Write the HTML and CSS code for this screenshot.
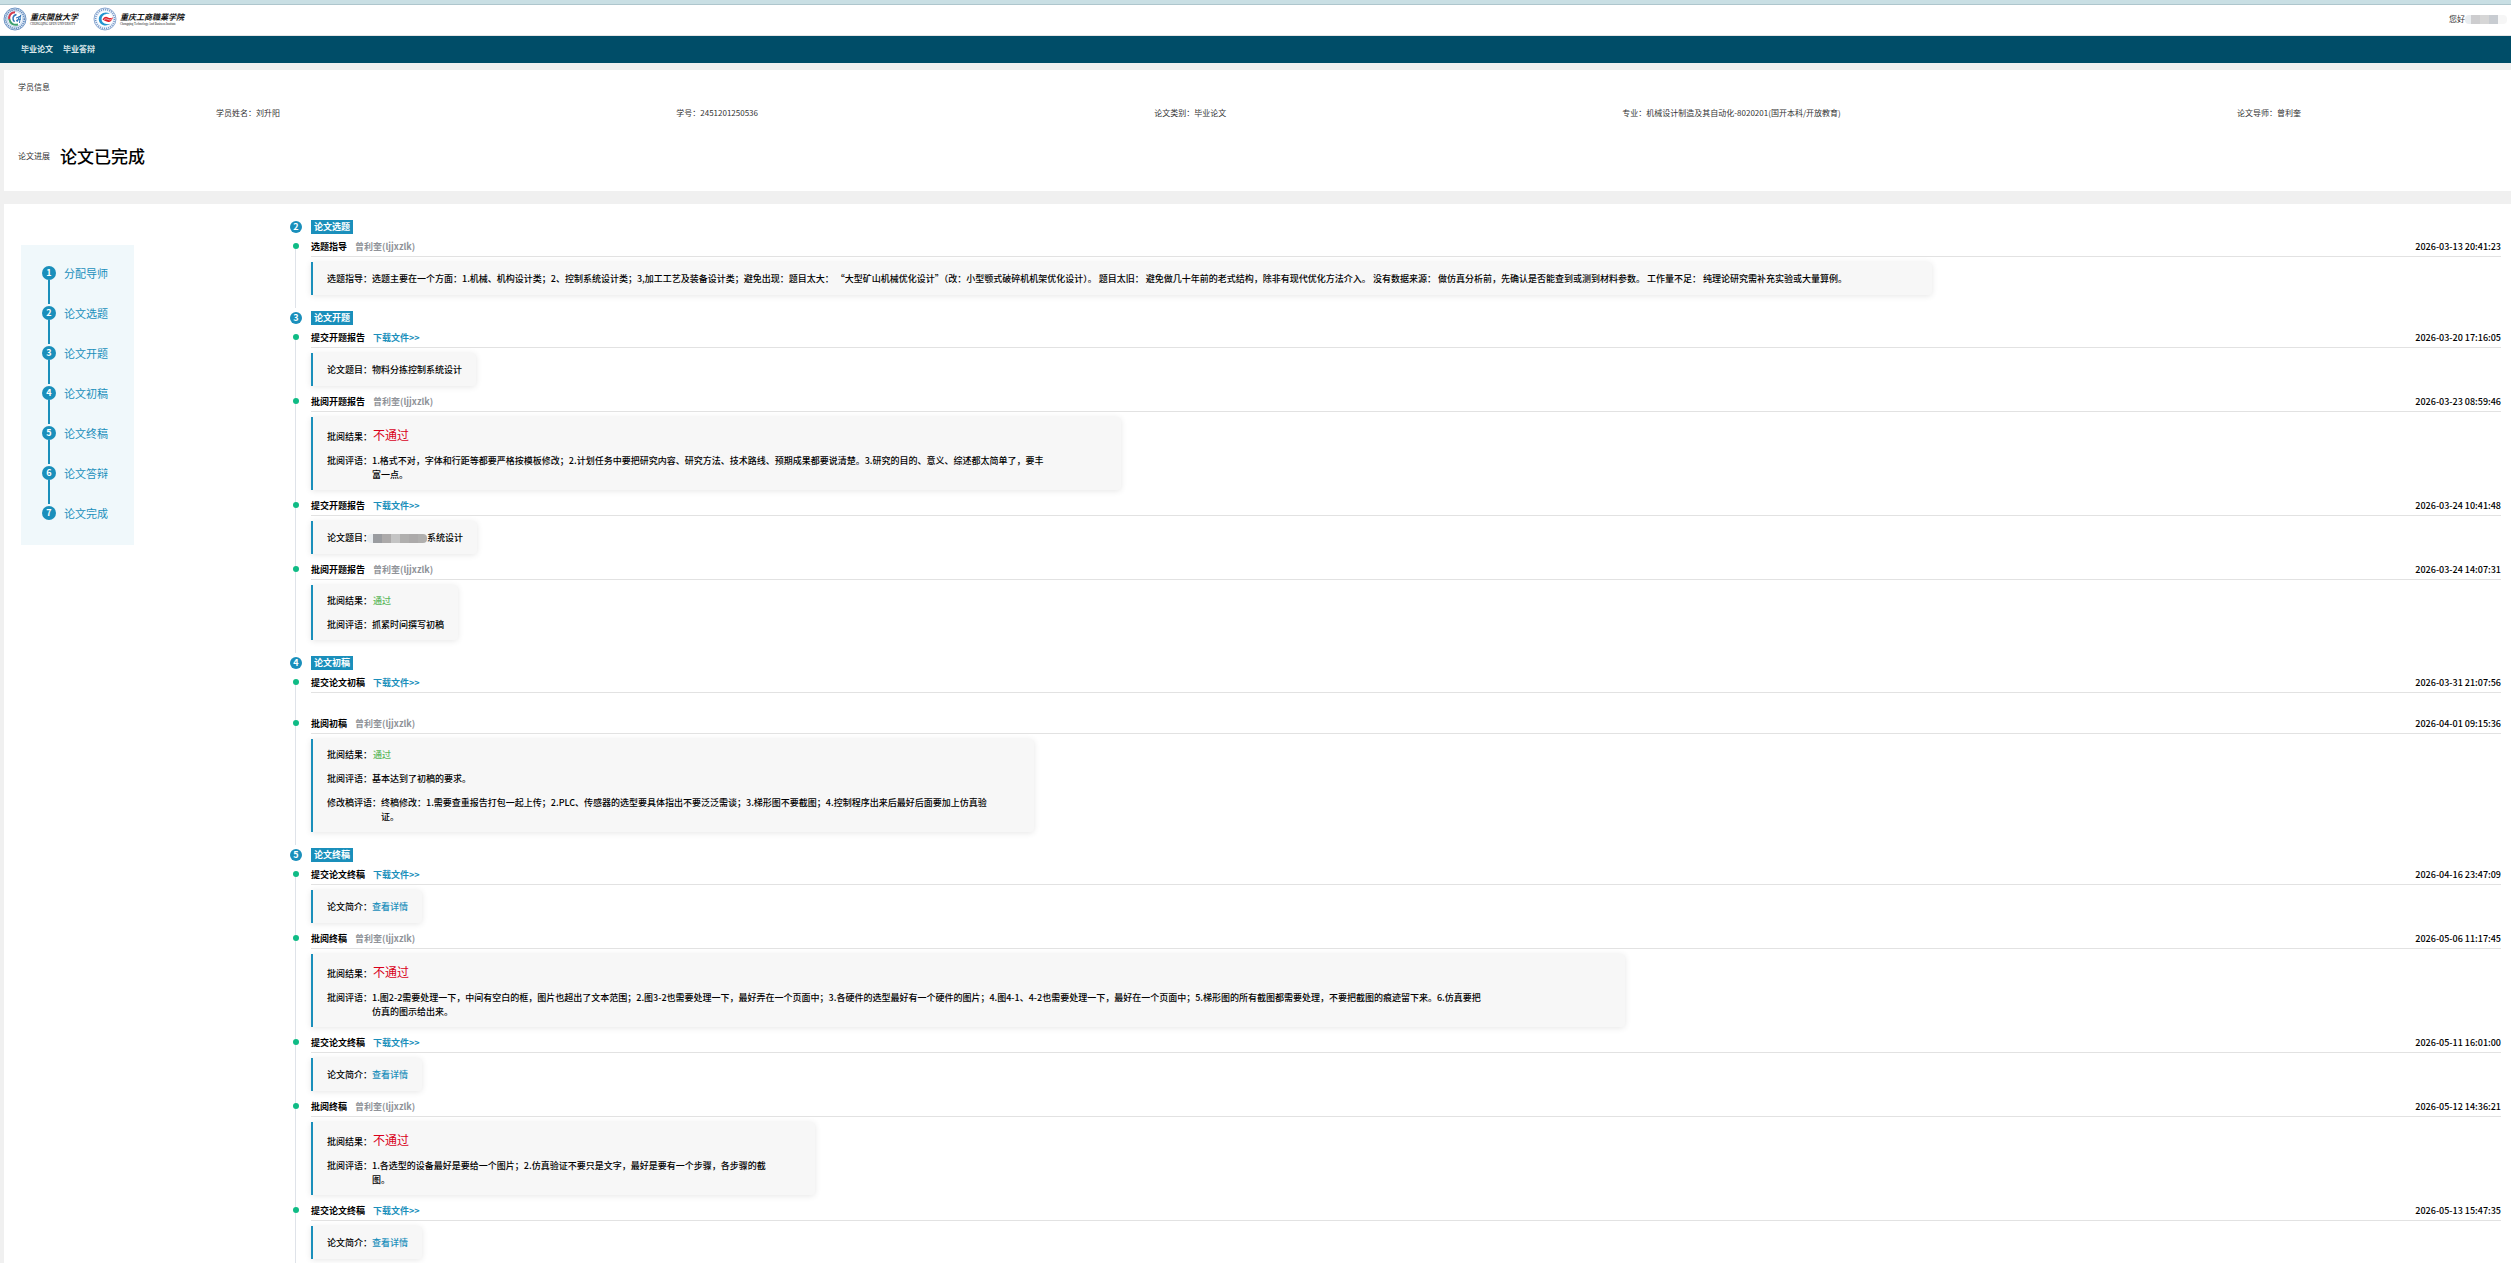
FILE: index.html
```html
<!DOCTYPE html>
<html lang="zh">
<head>
  <meta charset="UTF-8">
  <meta name="viewport" content="width=device-width, initial-scale=1.0">
  <title>毕业论文</title>
  <link rel="stylesheet" href="styles.css">
</head>
<body>
  <header class="top">
    <a href="#" class="logo">
      <svg width="24" height="24" viewBox="0 0 24 24">
        <circle cx="12" cy="12" r="11" fill="#e4edf7" stroke="#6f95c4" stroke-width="1"/>
        <circle cx="12" cy="12" r="9.3" fill="none" stroke="#5c86bc" stroke-width="1.6" stroke-dasharray="1.2 .9"/>
        <circle cx="12" cy="12" r="7.6" fill="#fff" stroke="#9db9da" stroke-width=".5"/>
        <path d="M12 5.2C7.500 5.500 5.600 9 6.300 12.500" fill="none" stroke="#d43a4c" stroke-width="2"/>
        <path d="M6.300 12C7 16.500 10.500 18.600 15 17.600" fill="none" stroke="#3fa06f" stroke-width="2"/>
        <path d="M13.500 7.500C9.500 8.500 9 12.500 11.500 14.800" fill="none" stroke="#2f74b8" stroke-width="1.500"/>
        <path d="M13 11l5-2M14 15l2.500-6M17.500 8l-1 8M13 13.500l5-1.500" fill="none" stroke="#2f74b8" stroke-width="1"/>
      </svg>
      <span class="logo-text"><b>重庆開放大学</b><i>CHONGQING OPEN UNIVERSITY</i></span>
    </a>
    <a href="#" class="logo">
      <svg width="24" height="24" viewBox="0 0 24 24">
        <circle cx="12" cy="12" r="11" fill="#eaf1f9" stroke="#8fabd2" stroke-width="1"/>
        <circle cx="12" cy="12" r="9.400" fill="none" stroke="#7396c8" stroke-width="1.600" stroke-dasharray="1 1.100"/>
        <circle cx="12" cy="12" r="7.800" fill="#fff"/>
        <path d="M17 6.800C12 3.500 5.600 7 5.800 12.500C6 17.800 12.500 20.500 17.500 16.800C13 18 8.600 16 8.600 12.200C8.600 8.200 12.500 6 17 6.800Z" fill="#2294cf"/>
        <path d="M9.500 12.500C11.500 9 13.500 9.500 15 10.500S18.500 11.200 20 10.200C19 14 17 15.500 14.500 14.800S11.500 13.500 9.500 12.500Z" fill="#e0202c"/>
        <path d="M11 12.500q2-1.500 4 0t4-.8" fill="none" stroke="#fff" stroke-width=".6"/>
      </svg>
      <span class="logo-text"><b>重庆工商職業学院</b><i>Chongqing Technology And Business Institute</i></span>
    </a>
    <div class="user">您好<span class="mosaic"><span class="m1"></span><span class="m2"></span><span class="m3"></span><span class="m4"></span><span class="m5"></span></span></div>
  </header>
  <nav class="nav">
    <a href="#">毕业论文</a>
    <a href="#">毕业答辩</a>
  </nav>

  <section class="card info">
    <h2>学员信息</h2>
    <ul class="info-list">
      <li>学员姓名：刘升阳</li>
      <li>学号：2451201250536</li>
      <li>论文类别：毕业论文</li>
      <li>专业：机械设计制造及其自动化-8020201(国开本科/开放教育)</li>
      <li>论文导师：曾利奎</li>
    </ul>
    <div class="progress"><span>论文进展</span><strong>论文已完成</strong></div>
  </section>

  <main class="card main">
    <aside class="steps">
      <ol>
        <li><span class="num">1</span>分配导师</li>
        <li><span class="num">2</span>论文选题</li>
        <li><span class="num">3</span>论文开题</li>
        <li><span class="num">4</span>论文初稿</li>
        <li><span class="num">5</span>论文终稿</li>
        <li><span class="num">6</span>论文答辩</li>
        <li><span class="num">7</span>论文完成</li>
      </ol>
    </aside>

    <div class="timeline">
      <section class="stage">
        <h3><span class="num">2</span><span class="tag">论文选题</span></h3>
        <div class="stage-body">
          <div class="item">
            <div class="item-head"><b>选题指导</b><span class="name">曾利奎(ljjxzlk)</span><time>2026-03-13 20:41:23</time></div>
            <dl class="box w74">
              <div><dt>选题指导：</dt><dd>选题主要在一个方面：1.机械、机构设计类；2、控制系统设计类；3,加工工艺及装备设计类；避免出现：题目太大： “大型矿山机械优化设计”（改：小型颚式破碎机机架优化设计）。 题目太旧： 避免做几十年前的老式结构，除非有现代优化方法介入。 没有数据来源： 做仿真分析前，先确认是否能查到或测到材料参数。 工作量不足： 纯理论研究需补充实验或大量算例。</dd></div>
            </dl>
          </div>
        </div>
      </section>

      <section class="stage">
        <h3><span class="num">3</span><span class="tag">论文开题</span></h3>
        <div class="stage-body">
          <div class="item">
            <div class="item-head"><b>提交开题报告</b><a href="#">下载文件&gt;&gt;</a><time>2026-03-20 17:16:05</time></div>
            <dl class="box">
              <div><dt>论文题目：</dt><dd>物料分拣控制系统设计</dd></div>
            </dl>
          </div>
          <div class="item">
            <div class="item-head"><b>批阅开题报告</b><span class="name">曾利奎(ljjxzlk)</span><time>2026-03-23 08:59:46</time></div>
            <dl class="box w37">
              <div><dt>批阅结果：</dt><dd class="fail">不通过</dd></div>
              <div><dt>批阅评语：</dt><dd>1.格式不对，字体和行距等都要严格按模板修改；2.计划任务中要把研究内容、研究方法、技术路线、预期成果都要说清楚。3.研究的目的、意义、综述都太简单了，要丰<br>富一点。</dd></div>
            </dl>
          </div>
          <div class="item">
            <div class="item-head"><b>提交开题报告</b><a href="#">下载文件&gt;&gt;</a><time>2026-03-24 10:41:48</time></div>
            <dl class="box">
              <div class="masked"><dt>论文题目：</dt><dd><span class="mosaic"><span class="m1"></span><span class="m6"></span><span class="m7"></span><span class="m8"></span><span class="m9"></span><span class="m7"></span><span class="m9"></span></span>系统设计</dd></div>
            </dl>
          </div>
          <div class="item">
            <div class="item-head"><b>批阅开题报告</b><span class="name">曾利奎(ljjxzlk)</span><time>2026-03-24 14:07:31</time></div>
            <dl class="box">
              <div><dt>批阅结果：</dt><dd class="pass">通过</dd></div>
              <div><dt>批阅评语：</dt><dd>抓紧时间撰写初稿</dd></div>
            </dl>
          </div>
        </div>
      </section>

      <section class="stage">
        <h3><span class="num">4</span><span class="tag">论文初稿</span></h3>
        <div class="stage-body">
          <div class="item empty">
            <div class="item-head"><b>提交论文初稿</b><a href="#">下载文件&gt;&gt;</a><time>2026-03-31 21:07:56</time></div>
          </div>
          <div class="item">
            <div class="item-head"><b>批阅初稿</b><span class="name">曾利奎(ljjxzlk)</span><time>2026-04-01 09:15:36</time></div>
            <dl class="box w33">
              <div><dt>批阅结果：</dt><dd class="pass">通过</dd></div>
              <div><dt>批阅评语：</dt><dd>基本达到了初稿的要求。</dd></div>
              <div><dt>修改稿评语：</dt><dd>终稿修改：1.需要查重报告打包一起上传；2.PLC、传感器的选型要具体指出不要泛泛需谈；3.梯形图不要截图；4.控制程序出来后最好后面要加上仿真验<br>证。</dd></div>
            </dl>
          </div>
        </div>
      </section>

      <section class="stage">
        <h3><span class="num">5</span><span class="tag">论文终稿</span></h3>
        <div class="stage-body">
          <div class="item">
            <div class="item-head"><b>提交论文终稿</b><a href="#">下载文件&gt;&gt;</a><time>2026-04-16 23:47:09</time></div>
            <dl class="box">
              <div><dt>论文简介：</dt><dd><a href="#">查看详情</a></dd></div>
            </dl>
          </div>
          <div class="item">
            <div class="item-head"><b>批阅终稿</b><span class="name">曾利奎(ljjxzlk)</span><time>2026-05-06 11:17:45</time></div>
            <dl class="box w60">
              <div><dt>批阅结果：</dt><dd class="fail">不通过</dd></div>
              <div><dt>批阅评语：</dt><dd>1.图2-2需要处理一下，中间有空白的框，图片也超出了文本范围；2.图3-2也需要处理一下，最好弄在一个页面中；3.各硬件的选型最好有一个硬件的图片；4.图4-1、4-2也需要处理一下，最好在一个页面中；5.梯形图的所有截图都需要处理，不要把截图的痕迹留下来。6.仿真要把<br>仿真的图示给出来。</dd></div>
            </dl>
          </div>
          <div class="item">
            <div class="item-head"><b>提交论文终稿</b><a href="#">下载文件&gt;&gt;</a><time>2026-05-11 16:01:00</time></div>
            <dl class="box">
              <div><dt>论文简介：</dt><dd><a href="#">查看详情</a></dd></div>
            </dl>
          </div>
          <div class="item">
            <div class="item-head"><b>批阅终稿</b><span class="name">曾利奎(ljjxzlk)</span><time>2026-05-12 14:36:21</time></div>
            <dl class="box w23">
              <div><dt>批阅结果：</dt><dd class="fail">不通过</dd></div>
              <div><dt>批阅评语：</dt><dd>1.各选型的设备最好是要给一个图片；2.仿真验证不要只是文字，最好是要有一个步骤，各步骤的截<br>图。</dd></div>
            </dl>
          </div>
          <div class="item">
            <div class="item-head"><b>提交论文终稿</b><a href="#">下载文件&gt;&gt;</a><time>2026-05-13 15:47:35</time></div>
            <dl class="box">
              <div><dt>论文简介：</dt><dd><a href="#">查看详情</a></dd></div>
            </dl>
          </div>
        </div>
      </section>
    </div>
  </main>
</body>
</html>
```
FILE: styles.css
```css
* {
  margin: 0;
  padding: 0;
  box-sizing: border-box;
}
body {
  background: #f0f0f0;
  color: #000;
  font: 9px/14px "Noto Sans CJK SC", sans-serif;
}
ul, ol {
  list-style: none;
}
a {
  color: #1a8fbb;
  text-decoration: none;
}
.top {
  display: flex;
  align-items: center;
  gap: 15px;
  height: 36px;
  padding: 0 4px 1px 3px;
  background: #fff;
  border-top: 4px solid #c9dfe4;
  border-bottom: 1px solid #e6e6e6;
  box-shadow: inset 0 1px 0 #aec6cd;
}
.logo {
  display: flex;
  align-items: center;
  gap: 3px;
  color: #111;
}
.logo svg {
  display: block;
}
.logo-text b,
.logo-text i {
  display: block;
  white-space: nowrap;
}
.logo-text b {
  font-size: 8px;
  line-height: 10px;
  font-style: italic;
}
.logo-text i {
  font: 3px/4px "Liberation Serif", serif;
}
.user {
  display: flex;
  align-items: center;
  margin-left: auto;
  font-size: 8px;
  color: #333;
}
.mosaic {
  display: inline-flex;
  height: 9px;
  border-radius: 4px;
  overflow: hidden;
}
.mosaic span {
  width: 9px;
  height: 9px;
}
.mosaic .m1 { width: 6px; background: #e9edf0; }
.mosaic .m2 { background: #cdcdcf; }
.mosaic .m3 { background: #d6d6d6; }
.mosaic .m4 { background: #c8ccd1; }
.mosaic .m5 { background: #f6f6f6; }
.mosaic .m6 { background: #9a9ca0; }
.mosaic .m7 { background: #acaaaa; }
.mosaic .m8 { background: #c4c4c4; }
.mosaic .m9 { background: #b0afae; }
.nav {
  display: flex;
  align-items: center;
  gap: 10px;
  height: 27px;
  padding: 0 0 2px 21px;
  background: #004d68;
}
.nav a {
  color: #d9e6ea;
  font-size: 8px;
  font-weight: bold;
}
.card {
  background: #fff;
  margin-left: 4px;
}
.info {
  margin-top: 7px;
  padding: 10px 12px 23px 14px;
  color: #333;
  font-size: 8px;
}
.info h2 {
  font-size: 8px;
  font-weight: normal;
}
.info-list {
  display: flex;
  justify-content: space-around;
  margin-top: 12px;
}
.progress {
  display: flex;
  align-items: center;
  gap: 10px;
  margin-top: 24px;
}
.progress strong {
  color: #000;
  font-size: 17px;
  line-height: 24px;
  font-weight: 500;
}
.main {
  display: flex;
  align-items: flex-start;
  margin-top: 13px;
  padding: 16px 10px 0 17px;
}
.num {
  display: block;
  border-radius: 50%;
  background: #1a8fbb;
  color: #fff;
  font-weight: bold;
  text-align: center;
}

/* 左侧步骤 */
.steps {
  flex: none;
  width: 113px;
  margin-top: 25px;
  padding: 20px 0 25px 21px;
  background: #f0f8fb;
}
.steps li {
  position: relative;
  display: flex;
  align-items: center;
  gap: 8px;
  height: 15px;
  margin-bottom: 25px;
  color: #1a8fbb;
  font-size: 11px;
}
.steps li:last-child {
  margin-bottom: 0;
}
.steps li:not(:last-child)::after {
  content: "";
  position: absolute;
  left: 6px;
  top: 15px;
  width: 2px;
  height: 24px;
  background: #1a8fbb;
}
.steps .num {
  width: 14px;
  height: 14px;
  font-size: 9px;
}

/* 时间轴 */
.timeline {
  flex: 1;
  margin-left: 156px;
}
.stage h3 {
  display: flex;
  align-items: center;
  gap: 9px;
  font-size: 9px;
}
.stage .num {
  width: 12px;
  height: 12px;
  line-height: 12px;
}
.tag {
  padding: 0 3px;
  background: #1a8fbb;
  color: #fff;
}
.stage-body {
  position: relative;
  margin: 6px 0 3px;
  padding: 0 0 4px 21px;
}
.stage-body::before {
  content: "";
  position: absolute;
  left: 5px;
  top: 6px;
  bottom: 0;
  width: 1px;
  background: #dfe3e9;
}
.item {
  position: relative;
  padding-bottom: 9px;
}
.item::before {
  content: "";
  position: absolute;
  left: -18px;
  top: 3px;
  width: 6px;
  height: 6px;
  border-radius: 50%;
  background: #0fbb85;
}
.item.empty {
  padding-bottom: 24px;
}
.item-head {
  display: flex;
  gap: 8px;
  height: 17px;
  border-bottom: 1px solid #e2e2e2;
  line-height: 14px;
}
.item-head a,
.item-head .name {
  font-weight: bold;
}
.item-head .name {
  color: #909399;
}
.item-head time {
  margin-left: auto;
  font-weight: 500;
}
.box {
  display: flex;
  flex-direction: column;
  justify-content: center;
  gap: 10px;
  width: fit-content;
  min-height: 33px;
  margin-top: 5px;
  padding: 9px 14px 8px;
  border-left: 2px solid #1a8fbb;
  border-radius: 0 4px 4px 0;
  background: #f7f7f7;
  box-shadow: 0 1px 6px rgba(0,0,0,0.1);
  font-weight: 500;
}
.box div {
  display: flex;
  align-items: baseline;
}
.box dt {
  flex: none;
}
.box .fail {
  color: #d9001b;
  font-size: 12px;
  line-height: 17px;
  font-weight: normal;
}
.box .fail,
.box .pass {
  margin-left: 1px;
}
.box .pass {
  color: #5cb85c;
}
.box .masked,
.box .masked dd {
  display: flex;
  align-items: center;
}
.box .masked .mosaic {
  margin-left: -5px;
}
.w74 { width: 74%; }
.w60 { width: 60%; }
.w37 { width: 37%; }
.w33 { width: 33%; }
.w23 { width: 23%; }
```
